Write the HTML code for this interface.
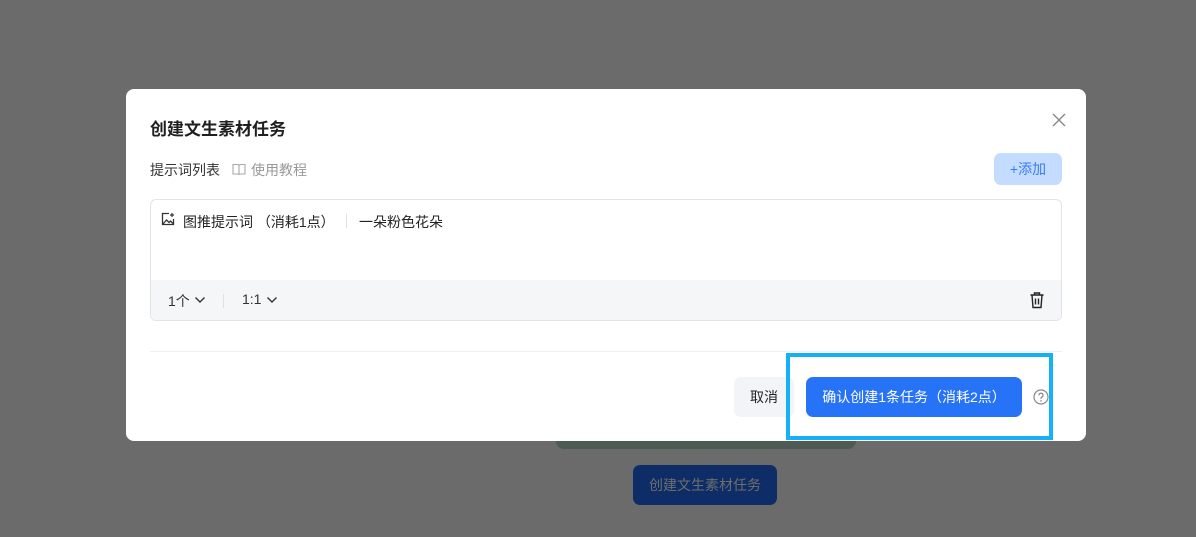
<!DOCTYPE html>
<html><head><meta charset="utf-8"><style>
*{margin:0;padding:0;box-sizing:border-box}
body{width:1196px;height:537px;background:#6b6b6b;position:relative;overflow:hidden;font-family:"Liberation Sans","Noto Sans CJK SC",sans-serif;}
.abs{position:absolute}
.bgbar{left:556px;top:436px;width:300px;height:13px;background:#4e5b55;border-radius:0 0 8px 8px}
.bgbtn{left:633px;top:465px;width:144px;height:40px;background:#0e2d66;border-radius:7px;color:#6e6e6e;font-size:14px;line-height:40px;text-align:center}
.modal{left:126px;top:89px;width:960px;height:352px;background:#fff;border-radius:8px}
.title{left:24px;top:26px;font-size:17px;font-weight:bold;color:#1f1f1f}
.close{left:924px;top:22px}
.lbl{left:24px;top:71px;font-size:14px;color:#333}
.tut{left:106px;top:71px;font-size:14px;color:#999}
.add{left:868px;top:64px;width:68px;height:32px;background:#c3dcff;border-radius:7px;color:#3d7df5;font-size:14px;line-height:32px;text-align:center}
.card{left:24px;top:110px;width:912px;height:122px;border:1px solid #e2e4e8;border-radius:6px;overflow:hidden}
.foot{left:0;top:80px;width:100%;height:42px;background:#f5f6f8}
.ptxt{left:32px;top:12px;font-size:14px;color:#222}
.sep{width:1px;background:#e0e0e0}
.hr{left:24px;top:262px;width:912px;height:1px;background:#eceef1}
.cancel{left:608px;top:288px;width:60px;height:40px;background:#f2f4f8;border-radius:7px;font-size:14px;line-height:40px;text-align:center;color:#222}
.ok{left:680px;top:288px;width:216px;height:40px;background:#2773f7;border-radius:7px;font-size:14px;line-height:40px;text-align:center;color:#fff}
.hl{left:786px;top:353px;width:267px;height:87px;border:4px solid #16b0f8}
</style></head><body>
<div class="abs bgbar"></div>
<div class="abs bgbtn">创建文生素材任务</div>
<div class="abs modal">
 <div class="abs title">创建文生素材任务</div>
 <svg class="abs close" width="18" height="18" viewBox="0 0 18 18"><path d="M3 3L15 15M15 3L3 15" stroke="#888" stroke-width="1.4"/></svg>
 <div class="abs lbl">提示词列表</div>
 <svg class="abs" style="left:106px;top:74px" width="14" height="13" viewBox="0 0 14 13"><path d="M1 1.5h4.5c.8 0 1.5.6 1.5 1.4V12c0-.6-.6-1-1.3-1H1zM13 1.5H8.5c-.8 0-1.5.6-1.5 1.4V12c0-.6.6-1 1.3-1H13z" fill="none" stroke="#aaa" stroke-width="1.1"/></svg>
 <div class="abs tut" style="left:125px">使用教程</div>
 <div class="abs add">+添加</div>
 <div class="abs card">
  <svg class="abs" style="left:10px;top:12px" width="14" height="14" viewBox="0 0 14 14"><path d="M8 1.5H1.5v11h11V7" fill="none" stroke="#333" stroke-width="1.3"/><path d="M2 12l3.5-4 2.5 2.5 1.5-1.5 3 3" fill="none" stroke="#333" stroke-width="1.3"/><path d="M11 1v4M9 3h4" stroke="#333" stroke-width="1.2"/></svg>
  <div class="abs ptxt">图推提示词 （消耗1点）</div>
  <div class="abs sep" style="left:195px;top:14px;height:14px"></div>
  <div class="abs ptxt" style="left:208px">一朵粉色花朵</div>
  <div class="abs foot">
   <div class="abs" style="left:17px;top:11px;font-size:14px;color:#333">1个</div>
   <svg class="abs" style="left:43px;top:15px" width="12" height="10" viewBox="0 0 12 10"><path d="M1.5 2.5L6 7l4.5-4.5" fill="none" stroke="#333" stroke-width="1.4"/></svg>
   <div class="abs sep" style="left:72px;top:14px;height:14px"></div>
   <div class="abs" style="left:91px;top:11px;font-size:14px;color:#333">1:1</div>
   <svg class="abs" style="left:115px;top:15px" width="12" height="10" viewBox="0 0 12 10"><path d="M1.5 2.5L6 7l4.5-4.5" fill="none" stroke="#333" stroke-width="1.4"/></svg>
   <svg class="abs" style="left:878px;top:11px" width="16" height="18" viewBox="0 0 16 18"><path d="M1.5 4h13M5.5 4V2h5v2M3 4l1 12.5h8L13 4M6.5 7.5v6M9.5 7.5v6" fill="none" stroke="#222" stroke-width="1.4"/></svg>
  </div>
 </div>
 <div class="abs hr"></div>
 <div class="abs cancel">取消</div>
 <div class="abs ok">确认创建1条任务（消耗2点）</div>
 <svg class="abs" style="left:907px;top:300px" width="16" height="16" viewBox="0 0 16 16"><circle cx="8" cy="8" r="7" fill="none" stroke="#888" stroke-width="1.2"/><path d="M6 6.3a2 2 0 1 1 2.7 1.8c-.5.3-.7.6-.7 1.2v.6" fill="none" stroke="#888" stroke-width="1.2"/><circle cx="8" cy="11.8" r=".8" fill="#888"/></svg>
</div>
<div class="abs hl"></div>
</body></html>
